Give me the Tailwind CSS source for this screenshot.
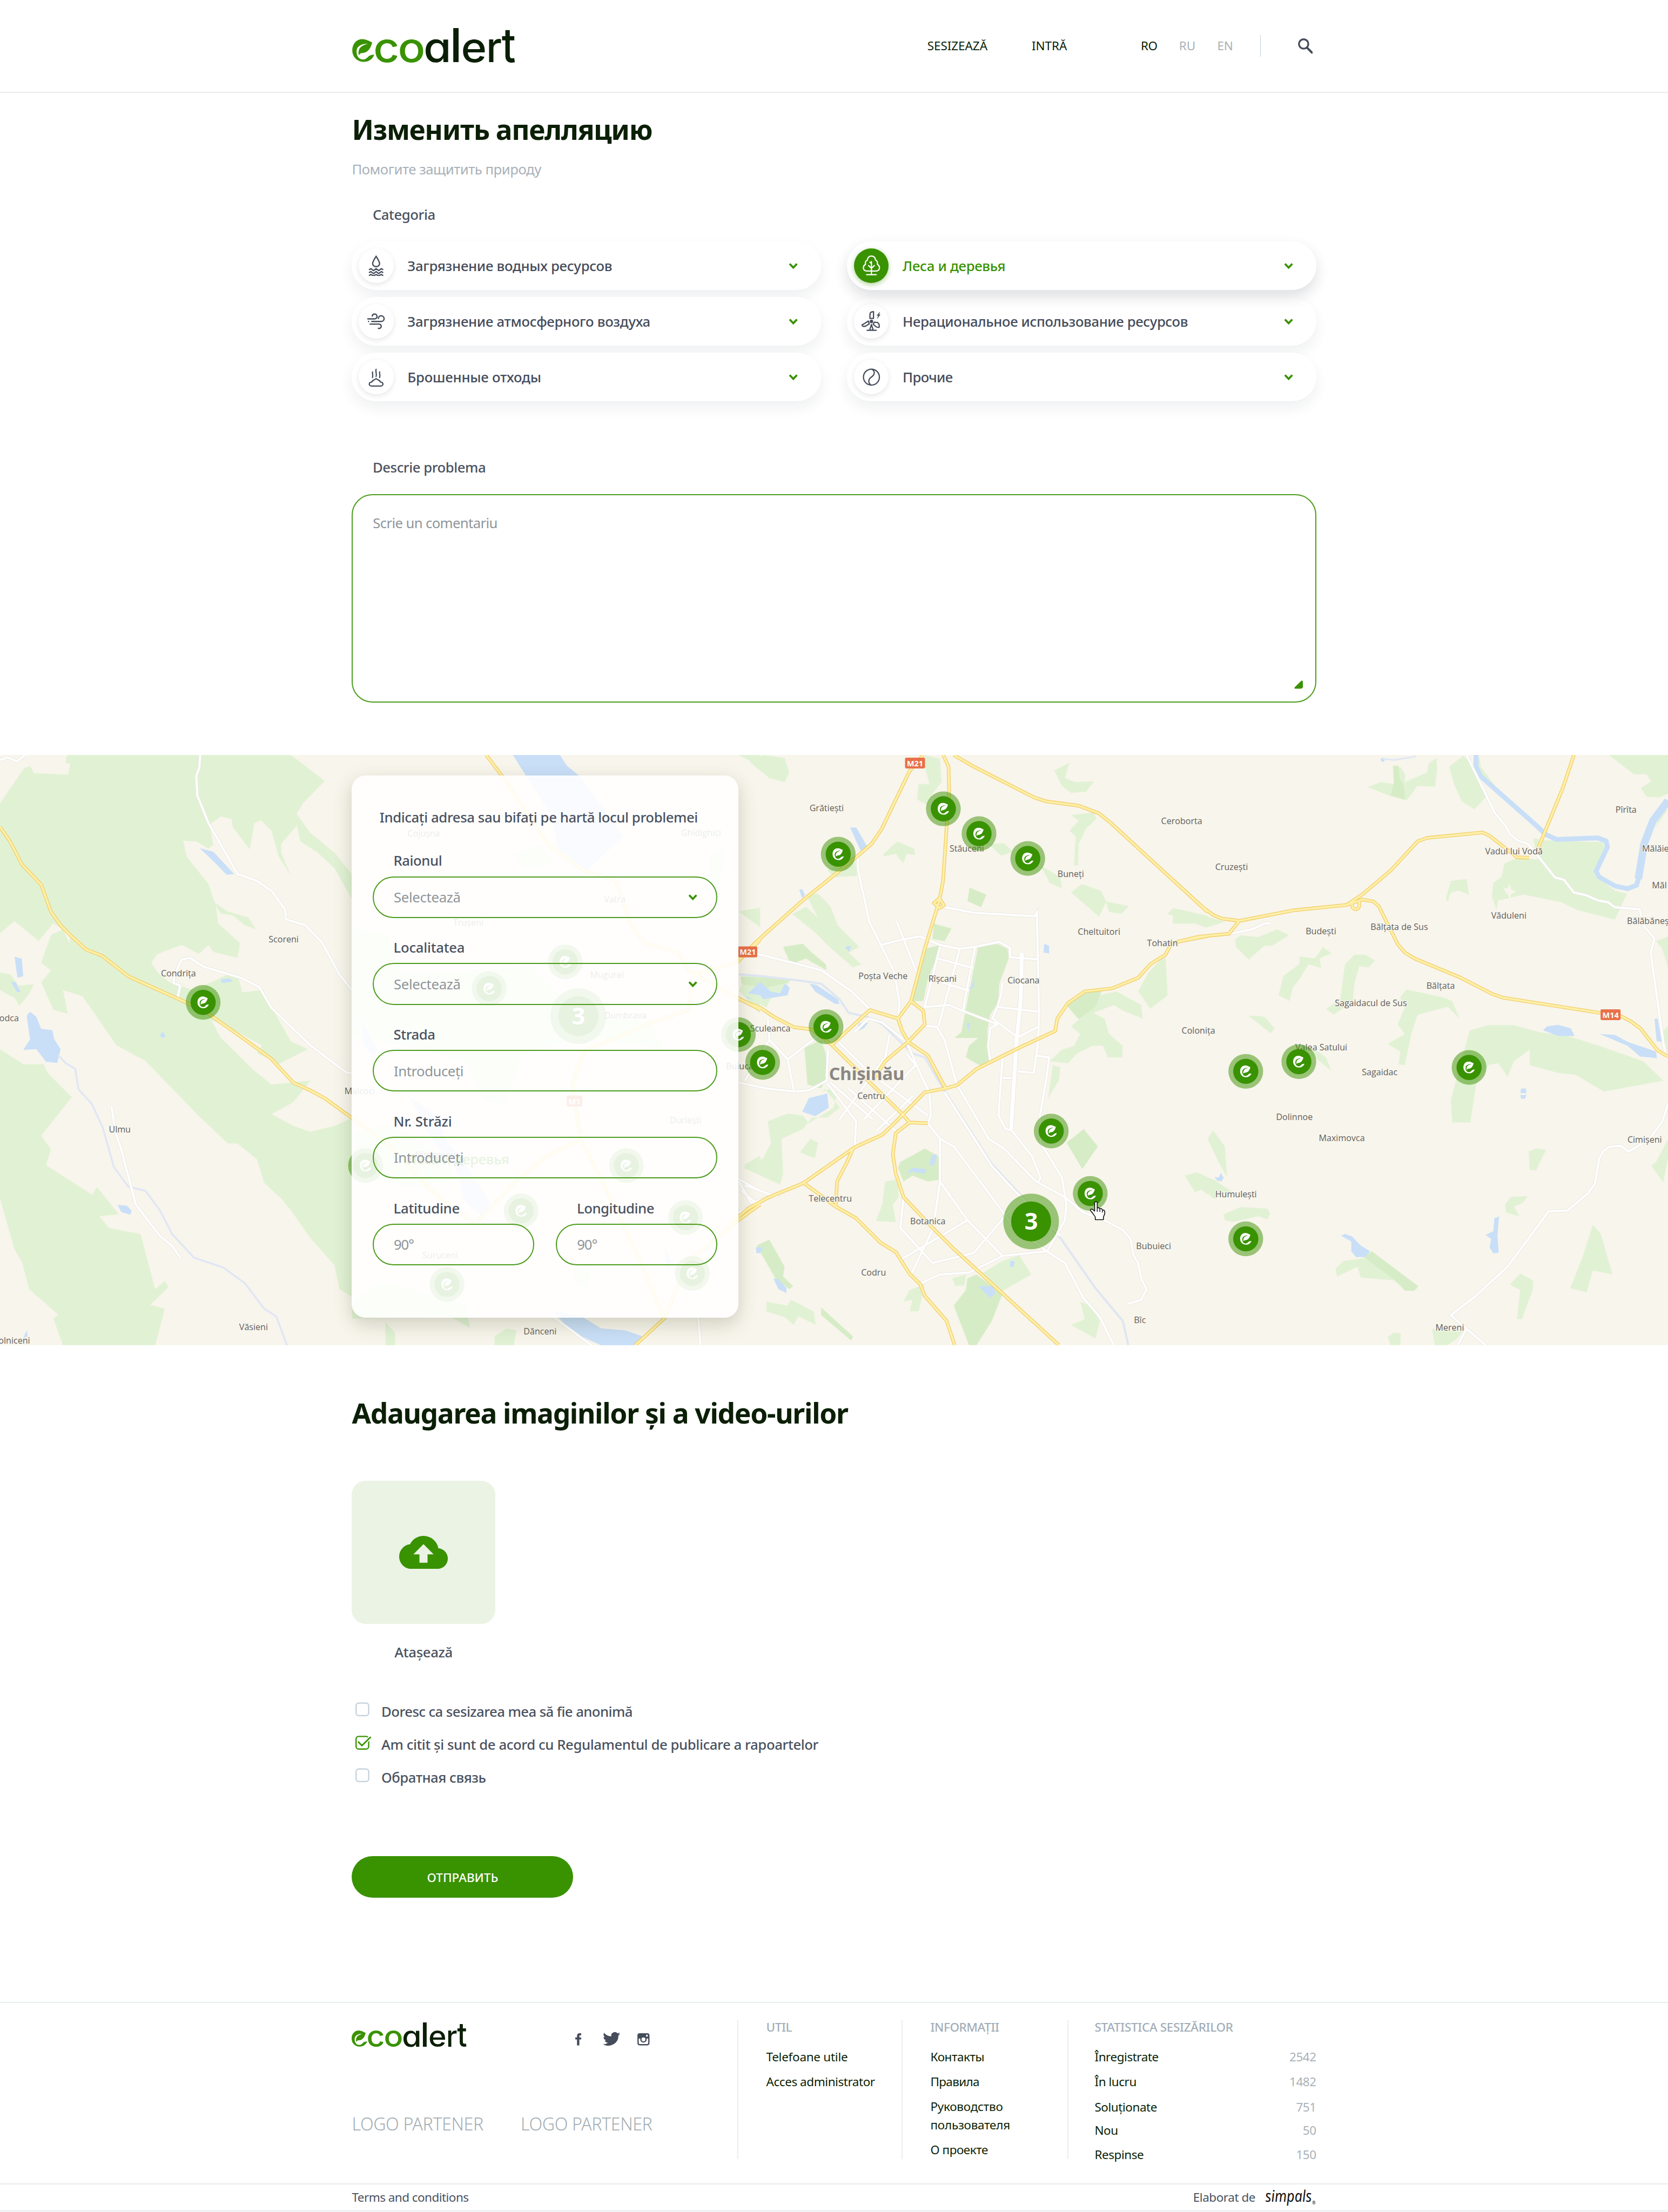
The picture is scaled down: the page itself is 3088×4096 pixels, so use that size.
<!DOCTYPE html>
<html lang="ro" class="text-[25.7333px]">
<head>
<meta charset="utf-8">
<title>ecoalert</title>
<script src="https://cdn.jsdelivr.net/npm/@tailwindcss/browser@4"></script>
</head>
<body class="bg-white font-['Noto_Sans',sans-serif] tracking-[-0.018em] text-[#4a5260] overflow-x-hidden">

<!-- shared symbols -->
<svg width="0" height="0" class="absolute">
  <defs>
    <symbol id="leaf" viewBox="28 122 157 164"><path d="M168 147C140 137 130 125 97 125C60 125 30 158 30 203C30 250 65 283 110 283C145 283 170 265 183 233C165 232 148 238 138 250C125 265 110 268 97 266C70 262 58 235 60 205C62 175 90 157 140 157C110 165 85 175 76 200C72 215 72 228 76 238C80 225 90 222 110 220C140 215 160 185 168 147Z"/></symbol>
    <symbol id="logo" viewBox="30 40 1140 248">
      <use href="#leaf" x="28" y="122" width="157" height="164" fill="#399200"/>
      <g font-family="Inter" font-weight="500" font-size="288" letter-spacing="0">
        <g fill="#399200">
          <text transform="translate(177 283) scale(1.09 1)">c</text>
          <text transform="translate(347 283) scale(1.1 1)">o</text>
        </g>
        <g fill="#0b1f06">
          <text transform="translate(540 283) scale(1.09 1) skewX(9.4)" font-style="italic">a</text>
          <text transform="translate(708 283) scale(1.2 1.14)">l</text>
          <text transform="translate(787 283) scale(1.06 1)">e</text>
          <text transform="translate(962 283) scale(.98 1)">r</text>
          <text transform="translate(1070 283) scale(1 1.14)">t</text>
        </g>
      </g>
    </symbol>
    <symbol id="chev" viewBox="0 0 12 8"><path d="M1.800 1.600L6 6L10.200 1.600" fill="none" stroke="#399200" stroke-width="2.3"/></symbol>
  </defs>
</svg>

<header class="h-26.75 border-b-2 border-[#e9ecec]">
  <div class="w-277.5 mx-auto h-full flex items-center">
    <svg class="w-47.5 h-10.25 -mt-0.5"><use href="#logo"/></svg>
    <nav class="ml-auto flex items-center text-sm tracking-[-0.003em] text-[#0b1f06] leading-6">
      <a>SESIZEAZĂ</a>
      <a class="ml-12.75">INTRĂ</a>
      <a class="ml-21.25 tracking-[-0.02em]">RO</a>
      <a class="ml-6.25 text-[#a9b1b8]">RU</a>
      <a class="ml-6.25 text-[#a9b1b8]">EN</a>
      <span class="ml-7.75 w-px h-6.25 bg-[#c3ced6]"></span>
      <svg class="ml-10.75 mr-1 w-4.25 h-4.5" viewBox="0 0 17 18"><circle cx="6.5" cy="6.5" r="5.4" fill="none" stroke="#454c5b" stroke-width="2.1"/><path d="M10.5 10.8L16 16.4" stroke="#454c5b" stroke-width="2.6" stroke-linecap="round"/></svg>
    </nav>
  </div>
</header>

<main>
  <section class="w-277.5 mx-auto pt-5.5">
    <h1 class="text-[2rem] leading-10 font-bold tracking-[-0.026em] text-[#0b1f06]">Изменить апелляцию</h1>
    <p class="mt-3.5 text-base leading-6 text-[#a9b1b8]">Помогите защитить природу</p>
    <h2 class="mt-7 ml-6 text-base leading-6 font-medium">Categoria</h2>

    <div class="mt-4.75 grid grid-cols-2 gap-x-7.5 gap-y-2 text-base font-medium tracking-[-0.011em] text-[#454c5b]">
      <div class="h-14 rounded-full bg-white shadow-[0_12px_26px_rgba(20,30,40,0.065)] flex items-center px-2">
        <span class="size-10 rounded-full bg-white shadow-[0_3px_10px_rgba(20,30,40,0.11)] flex items-center justify-center">
          <svg class="size-6" viewBox="-12 -12 24 24" fill="none" stroke="currentColor" stroke-width="1.5"><path d="M0-11C-2.4-7-4-4.600-4-2.700A4 3.600 0 0 0 4-2.700C4-4.600 2.400-7 0-11Z"/><path d="M-8.200 4.500L-6 3.200L-3 5.500L0 3.200L3 5.500L6 3.200L8.200 4.500M-8.200 7.900L-6 6.600L-3 8.900L0 6.600L3 8.900L6 6.600L8.200 7.900M-8.200 11.200L-6 9.900L-3 11.500L0 9.900L3 11.500L6 9.900L8.200 11.200" stroke-linejoin="round"/></svg>
        </span>
        <span class="ml-4">Загрязнение водных ресурсов</span>
        <svg class="ml-auto mr-4.5 w-3 h-2"><use href="#chev"/></svg>
      </div>
      <div class="relative z-10 h-14 rounded-full bg-white shadow-[0_12px_26px_rgba(20,30,40,0.14)] flex items-center px-2 text-[#399200]">
        <span class="size-10 rounded-full bg-[#399200] text-white shadow-[0_3px_10px_rgba(57,146,0,0.4)] flex items-center justify-center">
          <svg class="size-6" viewBox="-12 -12 24 24" fill="none" stroke="currentColor" stroke-width="1.4" stroke-linecap="round" stroke-linejoin="round"><path d="M-5 6C-8 6-9.500 4-9.300 1.800C-9-.500-7.500-1.500-6.700-1.900C-7.500-4-6.500-6.200-4.600-6.700C-4.800-9.500-2.500-11.300 0-11.300S4.800-9.500 4.600-6.700C6.500-6.200 7.500-4 6.700-1.900C7.500-1.500 9-.500 9.300 1.800C9.500 4 8 6 5 6Z"/><path d="M0 10V-5M0 2.800L-3.300-.300M0 2.800L3.300-.300M0-2.500L-1.800-4.200M-5.500 10.200H5.500"/></svg>
        </span>
        <span class="ml-4">Леса и деревья</span>
        <svg class="ml-auto mr-4.5 w-3 h-2"><use href="#chev"/></svg>
      </div>
      <div class="relative h-14 rounded-full bg-white shadow-[0_12px_26px_rgba(20,30,40,0.065)] flex items-center px-2">
        <span class="size-10 rounded-full bg-white shadow-[0_3px_10px_rgba(20,30,40,0.11)] flex items-center justify-center">
          <svg class="size-6" viewBox="-12 -12 24 24" fill="none" stroke="currentColor" stroke-width="1.5" stroke-linecap="round"><path d="M-9.500-3H-1.800A2.800 2.800 0 1 0-4.500-6.300M-8.700 0H-8.600M-5 0H5.700A3.300 3.300 0 1 0 2.600-3.500M-7 3H3.300A2.500 2.500 0 1 1 2.700 7.900"/></svg>
        </span>
        <span class="ml-4">Загрязнение атмосферного воздуха</span>
        <svg class="ml-auto mr-4.5 w-3 h-2"><use href="#chev"/></svg>
      </div>
      <div class="relative h-14 rounded-full bg-white shadow-[0_12px_26px_rgba(20,30,40,0.065)] flex items-center px-2">
        <span class="size-10 rounded-full bg-white shadow-[0_3px_10px_rgba(20,30,40,0.11)] flex items-center justify-center">
          <svg class="size-6" viewBox="-12 -12 24 24" fill="none" stroke="currentColor" stroke-width="1.4" stroke-linejoin="round"><path d="M-1.700-3.500V-8.500C-1.500-10.300 0-11.300 2.400-11.300V-3.500ZM-3.500-.500L-9 3L-10.800 3.800C-10.500 6-8.500 6-6.500 5.200L-2.500 2.800ZM3.200.800L2 3.200L5.500 6.200C7.500 7 9 7 9 6C9.200 3.500 8.500 2 7 1.200Z"/><circle r="1.300" fill="currentColor"/><path d="M0 3.500L-2 10H2ZM-5 10.200H5.500" stroke-linecap="round"/><path d="M9.500-10.700L6.400-6.900H8.200L6.800-3.600L10-7.800H8.300Z" fill="currentColor" stroke-width=".5"/></svg>
        </span>
        <span class="ml-4 tracking-[-0.015em]">Нерациональное использование ресурсов</span>
        <svg class="ml-auto mr-4.5 w-3 h-2"><use href="#chev"/></svg>
      </div>
      <div class="relative h-14 rounded-full bg-white shadow-[0_12px_26px_rgba(20,30,40,0.065)] flex items-center px-2">
        <span class="size-10 rounded-full bg-white shadow-[0_3px_10px_rgba(20,30,40,0.11)] flex items-center justify-center">
          <svg class="size-6" viewBox="-12 -12 24 24" fill="none" stroke="currentColor" stroke-width="1.4" stroke-linecap="round" stroke-linejoin="round"><path d="M-4-6C-5-4.500-3-3-4.200.500M0-9C-1.200-6.500 1.200-4 0-.700M4.200-6C3.200-4.500 5.200-3 4 .500"/><path d="M-5.500 10.300C-9 9.500-8.500 5.800-4.800 5.600C-4.800 3.500-1.500 3.500 0 1.600C1.500 3.500 4.800 3.500 4.800 5.600C8.500 5.800 9 9.500 5.500 10.300Z"/></svg>
        </span>
        <span class="ml-4 tracking-[-0.008em]">Брошенные отходы</span>
        <svg class="ml-auto mr-4.5 w-3 h-2"><use href="#chev"/></svg>
      </div>
      <div class="relative h-14 rounded-full bg-white shadow-[0_12px_26px_rgba(20,30,40,0.065)] flex items-center px-2">
        <span class="size-10 rounded-full bg-white shadow-[0_3px_10px_rgba(20,30,40,0.11)] flex items-center justify-center">
          <svg class="size-6" viewBox="-12 -12 24 24" fill="none" stroke="currentColor" stroke-width="1.4"><circle r="9.200"/><path d="M0-9.200C4.500-7.500 4-3 .500-.500C-3.500 2-4.500 6-.500 9.200"/></svg>
        </span>
        <span class="ml-4 tracking-[-0.025em]">Прочие</span>
        <svg class="ml-auto mr-4.5 w-3 h-2"><use href="#chev"/></svg>
      </div>
    </div>

    <h2 class="mt-16 ml-6 text-base leading-6 font-medium">Descrie problema</h2>
    <div class="mt-4.75 h-60 rounded-3xl border-2 border-[#4d9c1c] pt-5 px-5.75 text-base leading-6 tracking-[-0.025em] text-[#8e9599] relative">
      Scrie un comentariu
      <svg class="absolute right-3.5 bottom-3.5 w-2.5 h-2.5" viewBox="0 0 10 10"><path d="M1 9.500Q-.5 9 .8 7.600L7.800.700Q9.800-.700 10 1.500V7Q10 9.500 7 9.500Z" fill="#399200"/></svg>
    </div>
  </section>

  <section class="relative mt-15 h-170 bg-[#f8f5ec] overflow-hidden">
    <svg class="absolute inset-0 w-full h-full" viewBox="0 0 3840 1360" preserveAspectRatio="none">
      <defs>
        <g id="marker"><circle r="40" fill="#399200" fill-opacity=".5"/><circle r="29" fill="#399200"/><use href="#leaf" x="-14" y="-14" width="28" height="28" fill="#fff"/></g>
        <g id="cluster"><circle r="64" fill="#399200" fill-opacity=".5"/><circle r="46" fill="#399200"/><text y="19" text-anchor="middle" font-size="54" font-weight="700" fill="#fff">3</text></g>

        <g id="minor-w" fill="none" transform="translate(0 -38) scale(1.1161 .9056)">
          <path vector-effect="non-scaling-stroke" d="M413 42L411 75L405 95L407 145L430 215L490 345L530 362L562 390L588 435L590 460L630 475L665 520L700 600L726 640M365 665L372 628L358 622L360 600L375 562L392 558L420 580L500 610L535 632L560 685L640 780L715 850L726 850M0 55L15 48L35 58L52 42M230 937L238 1000L250 1045L275 1160L280 1185L330 1265L355 1290L373 1322M1140 1470L1220 1543M1440 1470L1445 1543M1523 1120L1568 1150M1530 1150L1568 1190"/>
        </g>
        <g id="major-w" fill="none" transform="translate(0 -38) scale(1.1161 .9056)">
          <path vector-effect="non-scaling-stroke" d="M0 225L20 260L45 320L85 372L105 440L125 475L145 500L178 537L210 552L265 605L385 672L430 700L510 770L560 815L605 875L640 895L670 915L726 965L800 1030L890 1150L980 1235L1060 1130L1130 1060L1198 1020L1240 1120L1310 1300L1370 1475L1310 1543M1003 42L1037 98L1130 270L1210 340L1270 360L1300 470L1330 520L1400 545L1420 590L1523 660L1568 690M1198 1020L1180 880L1205 795L1350 720L1420 690L1430 610M1568 512L1520 570L1430 600M1370 1475L1420 1330L1523 1225L1568 1185"/>
        </g>
        <g id="minor-c" fill="none" transform="translate(1680 -18) scale(.7015 .8929)">
          <path vector-effect="non-scaling-stroke" d="M420 283L422 320L458 450L540 580L557 660L552 700M548 450L612 578M497 510L560 497L625 488L690 510L755 520L805 515L885 502L920 518L920 542L1012 547M690 410L800 427L1000 436L1008 426L1015 690L1012 760L998 840L944 836M690 515L640 670L720 665L765 680L880 715M755 520L685 720M683 545L800 570M670 600L785 628M805 515L765 680M895 608L890 640L878 670L1015 682M878 715L855 725L848 770L855 810M878 670L862 700L945 748L1015 720M895 800L882 950L905 985L925 988L992 1055L1020 1110L1010 1125M895 853L925 853M1008 796L1048 800L1040 850L1018 950L1020 1020L1090 1110L1105 1180L1100 1220L1042 1300L895 1312L785 1355L690 1360L628 1382M640 718L680 722L705 755L745 870L850 1010L900 1035L1005 1120L1100 1160L1160 1200L1230 1220L1290 1245L1315 1268L1325 1310L1340 1330L1350 1370L1368 1398L1350 1425L1305 1436M50 525L300 575L400 630L465 680M125 700L130 755L190 805L210 885M190 805L290 745M30 865L120 880L210 888L260 885L318 860L322 780M130 755L50 860M318 865L415 965L410 1030M330 865L470 960M350 755L460 840L650 950M410 735L455 700L500 710L580 760L630 850L655 890L660 950L650 970M525 740L510 800L360 960M580 790L610 820L440 960M545 990L390 880M600 900L480 990M650 970L690 1010L690 1120L668 1240L595 1360M690 1010L735 1030L850 1150L925 1230L1040 1300L1100 1330L1160 1420L1215 1470L1260 1542M690 1120L780 1220L895 1312M570 1165L560 1240L665 1330L800 1305L925 1190M780 1220L565 1320M705 890L860 1080L930 1140L1085 1260M30 1120L70 1175L150 1158L50 1130M30 1200L130 1158"/>
          <path vector-effect="non-scaling-stroke" d="M955 530L952 650L938 760L920 985M962 530L958 650L944 760L926 985"/>
        </g>
        <g id="major-c" fill="none" transform="translate(1680 -18) scale(.7015 .8929)">
          <path vector-effect="non-scaling-stroke" d="M30 545L90 500L240 395L410 287L465 250L498 212L590 62L635 20M700 20L718 50L720 110L700 345L688 395L640 520L595 655L552 700L460 678L415 710L335 768L270 728L210 722L150 698L100 672L30 650M735 20L800 50L1000 130L1040 140L1145 151L1210 170L1250 195L1568 425M552 700L565 730L585 760L650 795L708 880L640 890L540 970L500 1000L410 1032L240 1125L130 1160L60 1190L0 1230M595 655L635 680L640 715L585 760L510 810L470 860M335 768L460 865L565 945L590 968L650 970M590 968L545 995L535 1050L545 1100L570 1160L660 1235L730 1290L1080 1542M708 880L745 872L810 830L950 775L1068 732L1075 700L1110 660L1165 630L1255 622L1340 595L1380 560L1430 535L1450 505L1568 487M405 1035L385 1070L352 1120L348 1185L245 1125M348 1185L415 1215L495 1278L545 1302L590 1358L625 1385L640 1415L712 1480L738 1542"/>
          <path vector-effect="non-scaling-stroke" d="M688 390L703 408L688 415L670 402Z"/>
        </g>
        <g id="minor-e" fill="none" transform="translate(2700 -18) scale(.7271 .8929)">
          <path vector-effect="non-scaling-stroke" d="M930 20L1020 170L1055 205L1068 225L1090 240L1125 250L1165 290L1210 336L1238 342L1270 375L1310 382L1345 395L1378 400L1400 413L1478 418L1490 460L1525 493L1513 530L1560 800M178 482L250 470L290 455L308 454M1568 920L1550 965L1510 1010L1450 1040L1440 1042L1420 1028L1385 1030L1365 1040L1350 1060L1337 1125L1315 1150L1250 1195L1190 1197L1060 1340L955 1418L880 1465L990 1542M930 1500L902 1542"/>
        </g>
        <g id="major-e" fill="none" transform="translate(2700 -18) scale(.7271 .8929)">
          <path vector-effect="non-scaling-stroke" d="M0 342L95 413L128 433L155 442L210 448L380 421L550 407L600 380L690 318L775 243L805 234L980 220L1002 228L1090 284L1128 285M210 448L178 481L80 489L0 505M550 407L600 393L635 398L652 410L712 508L735 530L765 545L910 594L1010 636L1045 646L1350 685L1420 694L1450 707L1480 725L1535 782L1568 798M1158 258L1235 105L1270 20"/>
          <path vector-effect="non-scaling-stroke" d="M568 402Q565 418 582 418Q594 414 590 396"/>
        </g>
      </defs>

      <!-- western part: forests and lakes -->
      <g transform="translate(0 -38) scale(1.1161 .9056)">
        <path fill="#e1f2d4" d="M0 165L50 75L62 70L70 88L140 92L145 65L135 62L138 42L600 42L670 108L625 165L612 192L640 240L690 290L726 345V410L690 330L655 290L620 262L612 222L580 268L580 290L600 350L575 300L560 235L538 208L525 215L515 282L480 225L478 205L455 198L432 220L440 270L430 280L405 262L378 260L385 300L430 370L445 425L450 470L495 520L490 558L440 543L430 525L410 548L375 525L325 548L312 570L325 595L350 620L400 640L470 600L490 602L500 645L540 640L600 770L635 790L575 828L530 800L540 780L480 740L435 715L455 760L520 840L560 880L640 870L605 925L560 955L605 985L640 1000L690 985L726 965V1420L700 1400L690 1340L640 1270L600 1200L580 1170L545 1130L530 1070L490 1030L470 1030L410 960L300 820L240 780L170 655L130 640L140 700L110 690L85 620L105 590L85 570L105 500L130 485L150 540L135 590L145 500L110 470L80 515L30 465L0 495ZM440 415L470 440L512 455L528 485L505 475L480 450L455 445ZM0 595L22 600L38 628L70 625L60 650L40 680L30 660L0 640ZM0 790L48 828L90 828L98 850L148 912L85 1010L105 1045L95 1085L190 1160L200 1140L245 1210L205 1215L225 1245L290 1260L320 1400L340 1380L348 1395L310 1440L340 1450L320 1543H130L110 1475L120 1465L60 1400L45 1330L30 1300L0 1170ZM726 1430L790 1380L960 1440L970 1500L930 1470L726 1475Z"/>
        <path fill="#e1f2d4" d="M726 480L800 500L830 600L980 590L1100 580L1140 640L1200 700L1340 720L1370 790L1200 760L1080 800L1040 930L1000 920L960 820L830 780L726 760ZM1060 290L1120 270L1140 320L1080 330ZM1465 300L1495 280L1480 400L1465 380ZM726 1010L800 980L900 1050L940 1120L850 1140L760 1120ZM1180 1340L1220 1350L1210 1400L1190 1390ZM795 1485L815 1510L815 1543H795ZM1020 1520L1045 1500L1065 1505L1060 1543H1020ZM1523 440L1568 430V480ZM1530 605H1568V700L1530 650ZM1535 1085L1568 1060V1105ZM1523 42H1568V70Z"/>
        <path fill="#c9dff8" d="M55 705L62 695L75 708L85 738L108 742L112 765L125 790L118 825L95 822L75 790L48 792L62 765ZM412 279L440 288L468 325L483 345L467 346L445 318ZM30 555L45 560L48 605L36 608ZM22 618L32 620L43 645L35 645ZM243 1186L262 1188L272 1202L268 1211L250 1204ZM455 612L475 610L480 618L458 622ZM330 755L336 745L342 758L334 762ZM55 1505L57 1520L48 1525ZM1058 42H1155L1170 70L1195 95L1240 170L1285 250L1210 335L1150 280L1140 200L1085 95ZM1140 1455L1200 1470L1240 1500L1290 1505L1325 1520L1310 1543H1240L1180 1510ZM745 720L780 790L770 810L750 780ZM845 910L900 960L920 1020L960 1080L1010 1180L1000 1220L960 1180L940 1090L890 1020ZM1370 1290L1385 1330L1375 1350ZM1545 630L1568 620V670L1540 660Z"/>
        <path fill="none" stroke="#e0e6f4" stroke-width="3.5" vector-effect="non-scaling-stroke" d="M120 805L135 825L155 840L162 892L190 930L212 990L235 1090L265 1140L300 1150L330 1200L355 1260L400 1320L460 1345L505 1385L545 1450L570 1470L592 1543"/>
      </g>

      <!-- city: parks and lakes -->
      <g transform="translate(1680 -18) scale(.7015 .8929)">
        <path fill="#e1f2d4" d="M65 38L110 20L180 28L195 65L180 90L130 80ZM505 275L550 243L605 262L608 278L580 275L570 300L545 275L505 282ZM320 318L410 280L418 332L345 335ZM250 380L290 378L330 410L355 460L425 515L390 530L432 560L405 568L370 545L320 510L280 478L205 430L250 412L290 440ZM640 20L690 30L695 90L665 120L650 150L615 135L620 95L655 95L640 50ZM850 250L900 248L930 270L890 280ZM1020 305L1085 335L1090 365L1050 350ZM1065 60L1115 40L1100 80L1135 90L1195 88L1170 115L1120 118L1090 100ZM1120 175L1195 168L1203 185L1170 210L1145 250L1143 305L1130 305L1135 230L1115 215L1145 190ZM1120 375L1155 353L1218 370L1235 398L1310 410L1285 430L1245 425L1235 400L1212 437ZM1435 430L1455 415L1568 435V465L1500 445ZM1350 640L1340 630L1375 580L1430 535L1437 640L1380 675ZM1050 810L1090 780L1130 770L1150 740L1120 720L1180 680L1230 700L1245 740L1290 770L1288 800L1240 800L1225 770L1190 770L1140 790L1110 815ZM1180 645L1270 630L1350 665L1355 700L1290 680L1260 665L1180 690ZM1060 820L1085 825L1080 860L1045 905ZM125 965L190 945L240 950L260 970L340 930L350 900L330 880L305 890L310 880L362 930L320 955L270 955L240 985L170 1010L175 1100L165 1128L45 1085L110 1060L135 1020ZM230 1045L265 1010L290 1020L280 1060ZM510 1120L550 1115L555 1160L535 1180L545 1225L480 1222L500 1180ZM895 1325L950 1310L990 1360L890 1405L820 1360ZM730 1370L775 1360L770 1388L740 1390ZM590 1400L640 1385L620 1455L590 1455L600 1425L570 1430ZM1150 1430L1180 1440L1215 1480L1200 1525L1120 1490L1165 1475ZM120 1430L190 1440L200 1425L275 1455L283 1490L225 1468L210 1490L180 1470L120 1455ZM1495 1105L1540 1098L1568 1110V1155L1540 1135ZM130 590L200 600L170 640L140 640L120 672L30 630L45 600Z"/>
        <path fill="#d6ecc6" d="M787 362L842 380L825 413L780 397ZM815 515L880 508L912 520L915 545L885 610L880 660L855 690L845 730L850 810L830 825L775 800L785 770L815 750H738L760 735ZM670 455L728 468L705 500L665 495ZM640 520L692 510L665 570L650 600L635 655L600 655ZM175 515L240 507L270 530L315 560L318 575L270 555L250 545L200 560ZM245 775L300 755L315 790L320 850L300 880L255 870ZM1105 665L1165 632L1220 630L1200 670L1145 702ZM1105 1020L1162 985L1208 1030L1157 1088ZM560 1070L640 1035L685 1055L690 1115L650 1120L600 1105L570 1120L552 1085ZM735 1440L775 1400L780 1370L810 1360L895 1410L860 1480L810 1542H785ZM88 1285L130 1270L180 1340L175 1365L208 1390L195 1398L150 1370ZM300 1445L405 1520L398 1530L300 1465ZM35 592L160 595L200 600L180 610L120 620L40 612Z"/>
        <path fill="#c9dff8" d="M395 207H415L450 255L430 268ZM228 368L238 366L247 382L238 390ZM60 635L100 605L135 630L165 635L180 610L197 620L190 640L110 650L100 640ZM262 610L285 613L355 650L360 663L345 662L280 630ZM378 515L400 512L390 528ZM412 735L425 712L455 710L440 725ZM238 940L260 905L320 893L325 930L280 952ZM1032 507L1048 512V532L1030 530ZM785 625L805 598L800 620ZM775 712L790 712L785 732ZM655 1080L662 1052L680 1050L672 1075ZM578 1100L600 1085L645 1088L640 1100L600 1095ZM920 1325L935 1325L932 1340H920ZM815 1390L865 1390L872 1408L855 1420ZM85 1290L110 1290L100 1305H88ZM143 1370L160 1372L186 1395V1408L160 1398Z"/>
        <path fill="none" stroke="#dfe6f2" stroke-width="4" vector-effect="non-scaling-stroke" d="M30 586L100 590L240 603L300 610L360 650L390 685L450 695L500 715L600 790L640 800L700 880L860 1075L960 1160L1080 1260L1200 1395L1290 1480L1308 1542"/>
      </g>

      <!-- eastern part: forests and the river -->
      <g transform="translate(2700 -18) scale(.7271 .8929)">
        <path fill="#e1f2d4" d="M617 103L660 90L700 95V60L720 50L735 70L735 90L805 65L810 42L835 28L837 60L830 102L775 100L740 138L685 125ZM875 50L920 22L960 60L990 130L955 160L915 140L890 95ZM970 20L975 50L1028 108L1015 110L965 60ZM1380 20H1568V120L1540 130L1500 128L1482 105L1515 88L1500 70L1460 70ZM1140 235L1180 240L1360 245L1370 260L1335 330L1400 370L1438 378L1400 445L1280 420L1230 400L1110 380L1060 390L1030 395L1025 420L1010 385L1015 350L1040 335L1050 300L1090 285L1155 290ZM1568 160L1525 210L1550 165ZM865 390L880 345L930 340L938 380L905 370L880 375L870 400ZM0 415L60 425L120 440L165 450L105 465L70 455H0ZM198 495L215 485L270 490L330 470L368 485L315 512H290L240 548L200 515ZM335 640L350 590L400 560L402 540L450 545L475 515L503 532L465 545L470 570L430 560L400 600L380 620L370 655ZM485 675L530 650L545 560L575 535L610 535L640 550L620 568L590 565L575 610L570 655L510 690ZM712 715L735 670L720 645L740 625L855 645L885 655L908 700L870 670L775 690L755 740L735 820L715 818L720 785L680 765L735 740ZM237 692L290 695L322 725L310 738L270 712ZM940 730L1000 717H1080L1160 735L1250 745L1350 770L1490 810L1553 860L1365 888L1275 845L1220 840L1130 820L1130 780L1080 810L1060 850L1030 815L1000 820L960 870L942 968H885L880 910ZM420 770L460 785L485 800L502 835L450 800ZM110 1010L128 988L165 1030L172 1110L145 1070ZM38 1105L75 1097L130 1115L185 1145L130 1165L95 1140L70 1148ZM160 1205L215 1186L300 1190L308 1203L300 1218L270 1210L190 1225L165 1220ZM1127 1042L1150 1035L1182 1038L1150 1092L1130 1090ZM1052 1180L1070 1160L1124 1158L1108 1175L1080 1185L1098 1210L1055 1200ZM1330 1232L1355 1255L1392 1360L1330 1350L1310 1406L1258 1395L1295 1320ZM1068 1385L1100 1358L1140 1375V1400L1105 1475H1090L1100 1400L1075 1390ZM515 1345L540 1325L630 1315L775 1395L760 1402L730 1398L700 1375L595 1368L585 1340L520 1365ZM680 1522L700 1510L722 1512L720 1542H690ZM820 1500L905 1508L925 1500L900 1525L870 1542H830ZM1568 1010L1530 1070L1515 1080L1553 1122L1568 1060ZM1530 500L1568 488V570L1550 520ZM1550 735L1568 720V790Z"/>
        <path fill="#d6ecc6" d="M697 48H715L718 80L732 100L735 135L690 125L700 90ZM605 1315L630 1300L777 1390L765 1402H735L720 1385Z"/>
        <path fill="#f8f5ec" d="M1045 362L1060 365L1065 352L1072 368L1088 372L1072 378L1068 390L1058 378Z"/>
        <path fill="none" stroke="#c9dff8" stroke-width="9" vector-effect="non-scaling-stroke" d="M960 20V50L975 75L1030 115L1155 205L1180 225L1215 238L1345 234L1372 242L1376 258L1340 320L1350 335L1400 358L1440 365L1468 356L1478 330"/>
        <path fill="none" stroke="#c9dff8" stroke-width="14" vector-effect="non-scaling-stroke" d="M1474 340L1492 250L1520 190L1568 138"/>
        <path fill="#c9dff8" d="M1172 730L1185 720L1220 716L1260 725L1272 745L1220 745ZM1352 740L1400 742L1440 760L1530 785L1533 802L1480 798L1440 770ZM1525 700H1535L1548 760L1532 758ZM1103 880H1118L1120 892H1100ZM1100 897H1120L1115 907H1103ZM132 1108L145 1110L152 1098L161 1110L155 1120L140 1118ZM533 1260L545 1255L568 1262L595 1285L625 1300L610 1315H580L565 1300V1275ZM1018 1215L1033 1210L1028 1260L1032 1304L1015 1306L1003 1290L1008 1268L990 1258L1015 1248ZM658 30L668 27L670 38L660 37Z"/>
        <path fill="none" stroke="#dfe8f4" stroke-width="3" vector-effect="non-scaling-stroke" d="M665 30L700 33L770 24"/>
      </g>

      <g stroke="#e6e4de" stroke-width="5.500"><use href="#minor-w"/><use href="#minor-c"/><use href="#minor-e"/></g>
      <g stroke="#fff" stroke-width="4"><use href="#minor-w"/><use href="#minor-c"/><use href="#minor-e"/></g>
      <g stroke="#f3cd68" stroke-width="6.500" stroke-linejoin="round"><use href="#major-w"/><use href="#major-c"/><use href="#major-e"/></g>
      <g stroke="#fdf0a9" stroke-width="3.800" stroke-linejoin="round"><use href="#major-w"/><use href="#major-c"/><use href="#major-e"/></g>

      <g id="places" class="font-['Open_Sans',sans-serif] tracking-normal" font-size="20" font-weight="500" fill="#615f5d" stroke="#f8f5ec" stroke-width="3" paint-order="stroke"></g>
      <text x="1995" y="749" text-anchor="middle" class="font-['Open_Sans',sans-serif] tracking-[-0.01em]" font-size="41" font-weight="700" fill="#8a8784" stroke="#f8f5ec" stroke-width="3" paint-order="stroke">Chișinău</text>
      <g id="shields" class="font-['Open_Sans',sans-serif] tracking-normal" font-size="18" font-weight="700"></g>
      <text x="937" y="943" font-size="32" font-weight="500" fill="#399200">Леса и деревья</text>
      <g id="markers"></g>
      <path transform="translate(2508 1028) scale(1.5)" d="M8 1.500Q10-.500 12 1.500V10L14 9.500L16 11L18.500 11L20 13L22.500 13.500Q24 15 23.500 19L21.500 24V28H9V24L5 18L1.500 14Q1.500 11 4.500 12L8 15Z" fill="#fff" stroke="#111" stroke-width="1.300" stroke-linejoin="round"/>
      <path transform="translate(2508 1028) scale(1.5)" d="M12 10V16M16 11V16M20 13V17" stroke="#111" stroke-width="1.200"/>
    </svg>

    <div class="relative w-277.5 mx-auto pt-6">
      <form class="w-111.25 h-156 rounded-2xl bg-white/88 shadow-[0_12px_34px_rgba(60,70,30,0.22)] px-6 pt-9 text-base">
        <p class="ml-2 leading-6 font-medium tracking-[-0.016em] whitespace-nowrap">Indicați adresa sau bifați pe hartă locul problemei</p>
        <div class="mt-5.5 grid grid-cols-2 gap-x-6.25">
          <label class="col-span-2 h-25">
            <span class="block pt-1 ml-6 leading-6 h-9.25 font-medium">Raionul</span>
            <span class="h-12 rounded-full border-2 border-[#4d9c1c] flex items-center px-5.75 -mt-0.75 text-[#8e9599] tracking-[-0.012em]">Selectează<svg class="ml-auto -mr-0.5 w-3 h-2"><use href="#chev"/></svg></span>
          </label>
          <label class="col-span-2 h-25">
            <span class="block pt-1 ml-6 leading-6 h-9.25 font-medium tracking-[-0.01em]">Localitatea</span>
            <span class="h-12 rounded-full border-2 border-[#4d9c1c] flex items-center px-5.75 -mt-0.75 text-[#8e9599] tracking-[-0.012em]">Selectează<svg class="ml-auto -mr-0.5 w-3 h-2"><use href="#chev"/></svg></span>
          </label>
          <label class="col-span-2 h-25">
            <span class="block pt-1 ml-6 leading-6 h-9.25 font-medium">Strada</span>
            <span class="h-12 rounded-full border-2 border-[#4d9c1c] flex items-center px-5.75 -mt-0.75 text-[#8e9599]">Introduceți</span>
          </label>
          <label class="col-span-2 h-25">
            <span class="block pt-1 ml-6 leading-6 h-9.25 font-medium tracking-[-0.002em]">Nr. Străzi</span>
            <span class="h-12 rounded-full border-2 border-[#4d9c1c] flex items-center px-5.75 -mt-0.75 text-[#8e9599]">Introduceți</span>
          </label>
          <label class="h-25">
            <span class="block pt-1 ml-6 leading-6 h-9.25 font-medium tracking-[-0.01em]">Latitudine</span>
            <span class="h-12 rounded-full border-2 border-[#4d9c1c] flex items-center px-5.75 -mt-0.75 text-[#8e9599] tracking-[-0.045em]">90°</span>
          </label>
          <label class="h-25">
            <span class="block pt-1 ml-6 leading-6 h-9.25 font-medium">Longitudine</span>
            <span class="h-12 rounded-full border-2 border-[#4d9c1c] flex items-center px-5.75 -mt-0.75 text-[#8e9599] tracking-[-0.045em]">90°</span>
          </label>
        </div>
      </form>
    </div>
  </section>

  <section class="w-277.5 mx-auto pt-14.5">
    <h2 class="text-[2rem] leading-10 font-bold tracking-[-0.025em] text-[#0b1f06]">Adaugarea imaginilor și a video-urilor</h2>
    <div class="mt-14.5 w-41.25 text-center">
      <div class="h-41.25 rounded-2xl bg-[#ebf3e5] flex items-center justify-center">
        <svg class="w-14 h-9.5" viewBox="0 4 24 16" preserveAspectRatio="none"><path fill="#399200" d="M19.350 10.040A7.490 7.490 0 0 0 12 4C9.110 4 6.600 5.640 5.350 8.040A5.994 5.994 0 0 0 0 14c0 3.310 2.690 6 6 6h13c2.760 0 5-2.240 5-5 0-2.640-2.050-4.780-4.650-4.960zM14 13v4h-4v-4H7l5-5 5 5h-3z"/></svg>
      </div>
      <p class="mt-5 text-base leading-6 font-medium tracking-[-0.014em]">Atașează</p>
    </div>
    <div class="mt-11.25 text-base leading-6 font-medium">
      <div class="flex h-9.5"><svg class="mt-0.25 ml-1 w-5 h-4.5" viewBox="0 0 20 18"><rect x=".750" y="1" width="14.500" height="14.500" rx="3" fill="none" stroke="#c4d0da" stroke-width="1.400"/></svg><span class="ml-2.5 -mt-px tracking-[-0.022em]">Doresc ca sesizarea mea să fie anonimă</span></div>
      <div class="flex h-9.5"><svg class="mt-0.25 ml-1 w-5 h-4.5" viewBox="0 0 20 18"><rect x=".750" y="1.500" width="14.500" height="14.500" rx="3" fill="none" stroke="#399200" stroke-width="1.500"/><path d="M3 7.500L7.500 12L17.700 2" fill="none" stroke="#fff" stroke-width="4"/><path d="M3 7.500L7.500 12L17.700 2" fill="none" stroke="#399200" stroke-width="1.700"/></svg><span class="ml-2.5 -mt-px tracking-[-0.016em]">Am citit și sunt de acord cu Regulamentul de publicare a rapoartelor</span></div>
      <div class="flex h-9.5"><svg class="mt-0.25 ml-1 w-5 h-4.5" viewBox="0 0 20 18"><rect x=".750" y="1" width="14.500" height="14.500" rx="3" fill="none" stroke="#c4d0da" stroke-width="1.400"/></svg><span class="ml-2.5 -mt-px">Обратная связь</span></div>
    </div>
    <button class="mt-16 block w-63.75 h-12 rounded-full bg-[#399200] text-white text-sm font-medium tracking-normal pt-0.5">ОТПРАВИТЬ</button>
  </section>
</main>

<footer class="mt-30 border-t-2 border-[#e6eced] text-sm text-[#0b1f06]">
  <div class="w-277.5 mx-auto h-52 pt-5 flex">
    <div class="w-111.25 shrink-0 h-40 border-r-2 border-[#e9eef0] flex flex-col">
      <div class="flex items-start text-[#454c5b] h-8">
        <svg class="shrink-0 mt-0.5 w-33.25 h-7.25"><use href="#logo"/></svg>
        <svg class="shrink-0 ml-31 mt-3.75 w-1.75 h-3.5" viewBox="0 0 7 14" fill="currentColor"><path d="M2 14V7.200H0V4.800H2V3.200C2 1.200 3 0 5 0H7V2.400H5.700C4.900 2.400 4.700 2.800 4.700 3.400V4.800H7L6.700 7.200H4.700V14Z"/></svg>
        <svg class="shrink-0 ml-6.25 mt-3.25 w-5 h-4" viewBox="0 1.500 24 20" preserveAspectRatio="none" fill="currentColor"><path d="M24 4.600a10 10 0 0 1-2.800.800 5 5 0 0 0 2.100-2.700 10 10 0 0 1-3.100 1.200A4.900 4.900 0 0 0 11.800 8.400 14 14 0 0 1 1.700 3.200 4.900 4.900 0 0 0 3.200 9.700a5 5 0 0 1-2.200-.600 4.900 4.900 0 0 0 3.900 4.900 5 5 0 0 1-2.200.100 4.900 4.900 0 0 0 4.600 3.400A10 10 0 0 1 0 19.500 14 14 0 0 0 21.500 7.100 10 10 0 0 0 24 4.600Z"/></svg>
        <svg class="shrink-0 ml-5 mt-3.75 w-3.5 h-3.5" viewBox="0 0 14 14" fill="none" stroke="currentColor"><rect x=".800" y=".800" width="12.400" height="12.400" rx="1.800" stroke-width="1.500"/><path d="M1 1H13V6H10.200A3.400 3.400 0 0 0 3.800 6H1Z" fill="currentColor" stroke="none"/><circle cx="7" cy="7" r="3" stroke-width="1.500" fill="#fff"/><rect x="10" y="1.800" width="2" height="2" fill="#fff" stroke="none"/></svg>
      </div>
      <div class="mt-18.25 flex gap-10.75 text-xl leading-7 font-light tracking-[-0.012em] text-[#a3adb3]"><span>LOGO PARTENER</span><span>LOGO PARTENER</span></div>
    </div>
    <div class="w-47.25 shrink-0 h-40 border-r-2 border-[#e9eef0] pl-8">
      <p class="leading-5 -mt-0.5 font-medium tracking-[-0.02em] text-[#a3adb8]">UTIL</p>
      <p class="mt-3.5 leading-5 tracking-[-0.012em]">Telefoane utile</p>
      <p class="mt-2.25 leading-5 whitespace-nowrap tracking-[-0.02em]">Acces administrator</p>
    </div>
    <div class="w-47.75 shrink-0 h-40 border-r-2 border-[#e9eef0] pl-8">
      <p class="leading-5 -mt-0.5 font-medium text-[#a3adb8]">INFORMAȚII</p>
      <p class="mt-3.5 leading-5">Контакты</p>
      <p class="mt-2.25 leading-5 tracking-[-0.03em]">Правила</p>
      <p class="mt-2 leading-5.25 tracking-[-0.012em]">Руководство<br>пользователя</p>
      <p class="mt-2 leading-5">О проекте</p>
    </div>
    <div class="flex-1 h-40 pl-7.5">
      <p class="leading-5 -mt-0.5 font-medium tracking-[-0.015em] text-[#a3adb8]">STATISTICA SESIZĂRILOR</p>
      <p class="mt-3.5 leading-5 flex justify-between">Înregistrate<span class="text-[#a9b1b8]">2542</span></p>
      <p class="mt-2.25 leading-5 flex justify-between">În lucru<span class="text-[#a9b1b8]">1482</span></p>
      <p class="mt-2.25 leading-5 flex justify-between">Soluționate<span class="text-[#a9b1b8]">751</span></p>
      <p class="mt-1.75 leading-5 flex justify-between">Nou<span class="text-[#a9b1b8]">50</span></p>
      <p class="mt-2 leading-5 flex justify-between">Respinse<span class="text-[#a9b1b8]">150</span></p>
    </div>
  </div>
  <div class="h-8 border-y-2 border-[#e6eced] text-[#4a5260]">
    <div class="w-277.5 mx-auto h-full flex items-center">
      <span class="tracking-[-0.024em]">Terms and conditions</span>
      <span class="ml-auto">Elaborat de</span>
      <svg class="ml-3 w-14.5 h-6" viewBox="0 0 58 24" fill="#111"><g font-family="Noto Sans" font-weight="400" letter-spacing="0"><text transform="translate(0 17) skewX(4)" font-style="italic" font-size="18.500" textLength="53.500" lengthAdjust="spacingAndGlyphs">simpals</text><text x="53.500" y="20" font-size="5">®</text></g></svg>
    </div>
  </div>
</footer>

<script>
  // Each map sheet has its own grid; project() turns it into map units.
  const project = {
    w: (x, y) => [x * 1.1161, y * 0.9056 - 38],
    c: (x, y) => [1680 + x * 0.7015, y * 0.8929 - 18],
    e: (x, y) => [2700 + x * 0.7271, y * 0.8929 - 18],
  };
  const places = [
    ['w', 'Cojușna', 874, 241], ['w', 'Ghidighici', 1446, 240], ['w', 'Vatra', 1268, 409], ['w', 'Trușeni', 966, 468],
    ['w', 'Mugurel', 1252, 601], ['w', 'Dumbrava', 1290, 705], ['w', 'Durlești', 1414, 971], ['w', 'Suruceni', 908, 1314],
    ['w', 'Nimoreni', 895, 1058], ['w', 'Malcoci', 742, 896], ['w', 'Dănceni', 1114, 1507], ['w', 'Scoreni', 585, 511],
    ['w', 'Condrița', 368, 597], ['w', 'Ulmu', 247, 994], ['w', 'Văsieni', 523, 1497], ['w', 'odca', 39, 711, 'end'], ['w', 'olniceni', 62, 1531, 'end'],
    ['c', 'Grătiești', 318, 157], ['c', 'Stăuceni', 778, 262], ['c', 'Buneți', 1119, 327], ['c', 'Ceroborta', 1483, 191],
    ['c', 'Cheltuitori', 1212, 476], ['c', 'Tohatin', 1420, 505], ['c', 'Poșta Veche', 503, 590], ['c', 'Rîșcani', 698, 597],
    ['c', 'Ciocana', 964, 601], ['c', 'Sculeanca', 133, 726], ['c', 'Buiucani', 45, 823], ['c', 'Centru', 464, 899],
    ['c', 'Telecentru', 330, 1164], ['c', 'Botanica', 650, 1222], ['c', 'Codru', 472, 1355], ['c', 'Bubuieci', 1391, 1286], ['c', 'Bîc', 1346, 1477],
    ['e', 'Cruzești', 186, 309], ['e', 'Budești', 469, 475], ['e', 'Bălțata de Sus', 717, 464], ['e', 'Vadul lui Vodă', 1080, 269],
    ['e', 'Văduleni', 1064, 434], ['e', 'Pîrîta', 1435, 161], ['e', 'Mălăie', 1486, 261, 'start'], ['e', 'Măl', 1517, 357, 'start'],
    ['e', 'Bălăbăneș', 1438, 448, 'start'], ['e', 'Bălțata', 848, 616], ['e', 'Sagaidacul de Sus', 627, 660], ['e', 'Colonița', 81, 731],
    ['e', 'Valea Satului', 470, 774], ['e', 'Sagaidac', 655, 838], ['e', 'Dolinnoe', 385, 954], ['e', 'Maximovca', 535, 1008],
    ['e', 'Humulești', 200, 1153], ['e', 'Cimișeni', 1494, 1012], ['e', 'Mereni', 877, 1497],
  ];
  const shields = [['c', 'M21', 608, 41, 46], ['c', 'M21', 59, 528, 44], ['e', 'M14', 1386, 690, 46], ['w', 'M1', 1185, 922, 36]];
  const markers = [
    ['w', 419, 671], ['w', 1166, 568], ['w', 1009, 636], ['w', 1193, 706, 'cluster'], ['w', 1523, 753], ['w', 754, 1086],
    ['w', 1292, 1086], ['w', 1075, 1201], ['w', 1414, 1218], ['w', 1428, 1360], ['w', 922, 1388],
    ['c', 701, 159], ['c', 818, 223], ['c', 356, 276], ['c', 978, 287], ['c', 316, 721], ['c', 108, 813],
    ['c', 1055, 990], ['c', 1183, 1151], ['c', 989, 1223, 'cluster'],
    ['e', 231, 836], ['e', 399, 811], ['e', 938, 826], ['e', 231, 1268],
  ];
  document.getElementById('places').innerHTML = places.map(([s, name, x, y, anchor = 'middle']) => {
    const [px, py] = project[s](x, y);
    return `<text x="${px}" y="${py + 7}" text-anchor="${anchor}">${name}</text>`;
  }).join('');
  document.getElementById('shields').innerHTML = shields.map(([s, name, x, y, w]) => {
    const [px, py] = project[s](x, y);
    return `<rect x="${px - w / 2}" y="${py - 12.5}" width="${w}" height="25" rx="3" fill="#e9714a"/><text x="${px}" y="${py + 7}" text-anchor="middle" fill="#fff">${name}</text>`;
  }).join('');
  document.getElementById('markers').innerHTML = markers.map(([s, x, y, kind = 'marker']) => {
    const [px, py] = project[s](x, y);
    return `<use href="#${kind}" x="${px}" y="${py}"/>`;
  }).join('');
</script>
</body>
</html>
